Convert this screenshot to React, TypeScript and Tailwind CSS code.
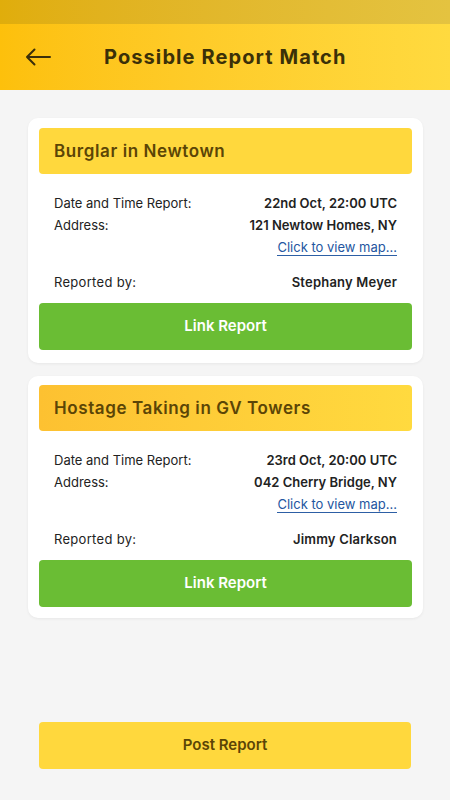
import React from "react";

interface Report {
  title: string;
  date: string;
  address: string;
  reporter: string;
  headerClass: string;
  cardClass: string;
}

const reports: Report[] = [
  {
    title: "Burglar in Newtown",
    date: "22nd Oct, 22:00 UTC",
    address: "121 Newtow Homes, NY",
    reporter: "Stephany Meyer",
    headerClass: "bg-[#ffd83d]",
    cardClass: "pt-[10px] pb-[13px]",
  },
  {
    title: "Hostage Taking in GV Towers",
    date: "23rd Oct, 20:00 UTC",
    address: "042 Cherry Bridge, NY",
    reporter: "Jimmy Clarkson",
    headerClass: "bg-gradient-to-r from-[#fdc131] to-[#ffda3f]",
    cardClass: "pt-[9px] pb-[11px]",
  },
];

function ReportCard({ report }: { report: Report }) {
  return (
    <div
      className={`rounded-[10px] bg-white px-[11px] shadow-[0_1px_3px_rgba(0,0,0,0.06)] ${report.cardClass}`}
    >
      <div
        className={`flex h-[46px] items-center rounded-[4px] px-[15px] pt-[1px] ${report.headerClass}`}
      >
        <span className="text-[17px] font-semibold tracking-[0.6px] text-[#5b4506]">
          {report.title}
        </span>
      </div>
      <div className="px-[15px] pt-[19px] text-[13px] text-[#222]">
        <div className="flex h-[22px] items-center justify-between">
          <span>Date and Time Report:</span>
          <span className="font-semibold">{report.date}</span>
        </div>
        <div className="flex h-[22px] items-center justify-between">
          <span>Address:</span>
          <span className="font-semibold">{report.address}</span>
        </div>
        <div className="flex h-[22px] items-center justify-end">
          <span className="border-b border-[#2d5fa5] leading-[15px] text-[#2456a0]">
            Click to view map...
          </span>
        </div>
        <div className="mt-[13px] flex h-[22px] items-center justify-between">
          <span className="tracking-[0.3px]">Reported by:</span>
          <span className="font-semibold tracking-[0.2px]">{report.reporter}</span>
        </div>
      </div>
      <button className="mt-[9px] flex h-[47px] w-full items-center justify-center rounded-[4px] bg-[#6abd34] text-[15px] font-semibold text-white">
        Link Report
      </button>
    </div>
  );
}

export default function App() {
  return (
    <div
      className="flex min-h-[800px] w-[450px] flex-col bg-[#f5f5f5]"
      style={{ fontFamily: "Inter, Roboto, sans-serif" }}
    >
      <div className="h-[24px] bg-gradient-to-r from-[#e0ad0b] to-[#e4c340]" />
      <div className="flex h-[66px] items-center bg-gradient-to-r from-[#fdc00b] to-[#ffda3f] pl-[25px]">
        <svg width="26" height="18" viewBox="0 0 26 18" fill="none">
          <path
            d="M25 9H2M9.5 1.5L2 9l7.5 7.5"
            stroke="#3b2f0a"
            strokeWidth="2"
            strokeLinecap="round"
            strokeLinejoin="round"
          />
        </svg>
        <span className="ml-[53px] text-[20px] font-bold tracking-[1.1px] text-[#3b3008]">
          Possible Report Match
        </span>
      </div>
      <div className="flex flex-col gap-[13px] pl-[28px] pr-[27px] pt-[28px]">
        {reports.map((r) => (
          <ReportCard key={r.title} report={r} />
        ))}
      </div>
      <div className="mt-auto px-[39px] pb-[31px]">
        <button className="flex h-[47px] w-full items-center justify-center rounded-[4px] bg-[#ffd83d] text-[15px] font-semibold text-[#5b4506]">
          Post Report
        </button>
      </div>
    </div>
  );
}
